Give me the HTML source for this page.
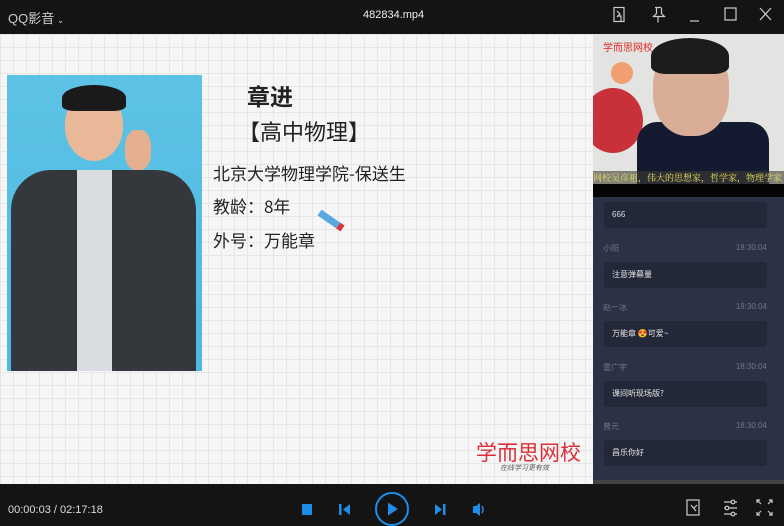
<!DOCTYPE html>
<html><head><meta charset="utf-8"><style>
*{margin:0;padding:0;box-sizing:border-box}
body{width:784px;height:525px;overflow:hidden;background:#141414;font-family:"Liberation Sans","Noto Sans CJK SC",sans-serif;position:relative}
.abs{position:absolute}
#top{left:0;top:0;width:784px;height:34px;background:#141414;color:#ddd}
#video{left:0;top:34px;width:593px;height:450px;background-color:#f6f6f6;
background-image:linear-gradient(#e6e6e6 1px,transparent 1px),linear-gradient(90deg,#e6e6e6 1px,transparent 1px);background-size:13px 13px}
.t{color:#222;font-family:"Noto Sans CJK SC",sans-serif;white-space:nowrap}
#chat{left:593px;top:197px;width:191px;height:283px;background:#2b3245;overflow:hidden}
.b{position:absolute;left:11px;width:163px;height:26px;background:#232838;border-radius:3px;color:#e6e6e6;font-size:8px;padding-left:8px;line-height:26px;font-family:"Noto Sans CJK SC",sans-serif}
.n{position:absolute;left:10px;font-size:8px;color:#6f7688;font-family:"Noto Sans CJK SC",sans-serif}
.tm{position:absolute;right:17px;font-size:8px;color:#6f7688}
#bot{left:0;top:484px;width:784px;height:41px;background:#141414}
</style></head><body>
<div id="top" class="abs">
<div class="abs" style="left:8px;top:8px;font-size:13px;color:#ccc;font-family:'Liberation Sans','Noto Sans CJK SC',sans-serif">QQ影音<span style="font-size:9px"> ⌄</span></div>
<div class="abs" style="left:363px;top:9px;font-size:11px;color:#eee">482834.mp4</div>
<svg class="abs" style="left:610px;top:6px" width="170" height="18" fill="none" stroke="#ccc" stroke-width="1.2">
<rect x="4" y="1.5" width="10" height="14"/><path d="M7 5l3 3-3 3M7 10h4v5"/>
<path d="M45 1.5h6M46.5 1.5v6l-3 3h11l-3-3v-6M48 10.5v6"/>
<path d="M80 15h9"/><rect x="115" y="2" width="11" height="12"/><path d="M150 2l11 12M161 2l-11 12"/>
</svg>
</div>
<div id="video" class="abs">
<div class="abs" style="left:7px;top:41px;width:195px;height:296px;background:linear-gradient(#5cc3e6,#4fb8de)">
<div class="abs" style="left:58px;top:18px;width:58px;height:68px;background:#e9b898;border-radius:45% 45% 50% 50%"></div>
<div class="abs" style="left:55px;top:10px;width:64px;height:26px;background:#1a1a1a;border-radius:50% 50% 20% 20%"></div>
<div class="abs" style="left:4px;top:95px;width:185px;height:201px;background:#34373c;border-radius:40px 40px 0 0"></div>
<div class="abs" style="left:70px;top:95px;width:35px;height:201px;background:#d9dce0"></div>
<div class="abs" style="left:118px;top:55px;width:26px;height:40px;background:#e4b090;border-radius:40%"></div>
</div>
<div class="abs t" style="left:247px;top:44px;font-size:23px;font-weight:bold">章进</div>
<div class="abs t" style="left:238px;top:81px;font-size:22px">【高中物理】</div>
<div class="abs t" style="left:213px;top:126px;font-size:17px">北京大学物理学院-保送生</div>
<div class="abs t" style="left:213px;top:159px;font-size:17px">教龄：8年</div>
<div class="abs t" style="left:213px;top:193px;font-size:17px">外号：万能章</div>
<div class="abs" style="left:317px;top:183px;width:28px;height:7px;background:#5aa8e0;transform:rotate(35deg);border-right:5px solid #d33"></div>
<div class="abs" style="left:476px;top:403px;font-size:21px;color:#d9303a;font-family:'Noto Sans CJK SC',sans-serif;white-space:nowrap">学而思网校</div>
<div class="abs" style="left:500px;top:429px;font-size:7px;color:#555;font-style:italic;font-family:'Noto Sans CJK SC',sans-serif">在线学习更有效</div>
</div>
<div class="abs" style="left:593px;top:34px;width:191px;height:150px;background:#e3e3e1;overflow:hidden">
<div class="abs" style="left:-10px;top:54px;width:60px;height:65px;background:#c8303a;border-radius:50%"></div>
<div class="abs" style="left:18px;top:28px;width:22px;height:22px;background:#f0a070;border-radius:50%"></div>
<div class="abs" style="left:10px;top:5px;font-size:10px;color:#e02828;font-family:'Noto Sans CJK SC',sans-serif">学而思网校</div>
<div class="abs" style="left:44px;top:88px;width:132px;height:62px;background:#141a30;border-radius:20px 20px 0 0"></div>
<div class="abs" style="left:60px;top:10px;width:76px;height:92px;background:#d9ad96;border-radius:45%"></div>
<div class="abs" style="left:58px;top:4px;width:78px;height:36px;background:#1c1c1c;border-radius:50% 50% 20% 20%"></div>
<div class="abs" style="left:0;top:137px;width:191px;height:13px;background:rgba(60,60,50,.6);color:#e8e060;font-size:9px;line-height:13px;white-space:nowrap;font-family:'Noto Serif CJK SC',serif">网校吴彦祖，伟大的思想家，哲学家，物理学家</div>
</div>
<div class="abs" style="left:593px;top:184px;width:191px;height:13px;background:#050505"></div>
<div id="chat" class="abs">
<div class="b" style="top:5px">666</div>
<div class="n" style="top:46px">小阳</div><div class="tm" style="top:46px">18:30:04</div>
<div class="b" style="top:65px">注意弹幕量</div>
<div class="n" style="top:105px">赵一冰</div><div class="tm" style="top:105px">18:30:04</div>
<div class="b" style="top:124px">万能章 😍可爱~</div>
<div class="n" style="top:165px">雷广宇</div><div class="tm" style="top:165px">18:30:04</div>
<div class="b" style="top:184px">课间听现场版?</div>
<div class="n" style="top:224px">曾元</div><div class="tm" style="top:224px">18:30:04</div>
<div class="b" style="top:243px">昌乐你好</div>
</div>
<div class="abs" style="left:593px;top:480px;width:191px;height:4px;background:#444"></div>
<div id="bot" class="abs">
<div class="abs" style="left:8px;top:20px;font-size:11px;color:#ddd">00:00:03 / 02:17:18</div>
<svg class="abs" style="left:296px;top:8px" width="195" height="34" fill="#1e8de8">
<rect x="6" y="12" width="10" height="11" rx="1"/>
<rect x="43" y="12" width="2.5" height="11"/><path d="M47 17.5l7-5.5v11z"/>
<circle cx="96" cy="17" r="16" fill="none" stroke="#1e8de8" stroke-width="2"/><path d="M92 10.5l10 6.5-10 6.5z"/>
<path d="M139 12l7 5.5-7 5.5z"/><rect x="147" y="12" width="2.5" height="11"/>
<path d="M177 14h3l4-3v13l-4-3h-3z"/><path d="M186 14q2 3.5 0 7" fill="none" stroke="#1e8de8" stroke-width="1.5"/>
</svg>
<svg class="abs" style="left:684px;top:14px" width="96" height="20" fill="none" stroke="#ccc" stroke-width="1.2">
<rect x="3" y="2" width="12" height="15"/><path d="M7 7l5 6M10 10l3-3"/>
<path d="M40 4h13M40 10h13M40 16h13"/><circle cx="49" cy="4" r="1.8" fill="#141414"/><circle cx="43" cy="10" r="1.8" fill="#141414"/><circle cx="49" cy="16" r="1.8" fill="#141414"/>
<path d="M76 2h-3v3M73 2l4 4M85 2h3v3M88 2l-4 4M76 17h-3v-3M73 17l4-4M85 17h3v-3M88 17l-4-4"/>
</svg>
</div>
</body></html>
